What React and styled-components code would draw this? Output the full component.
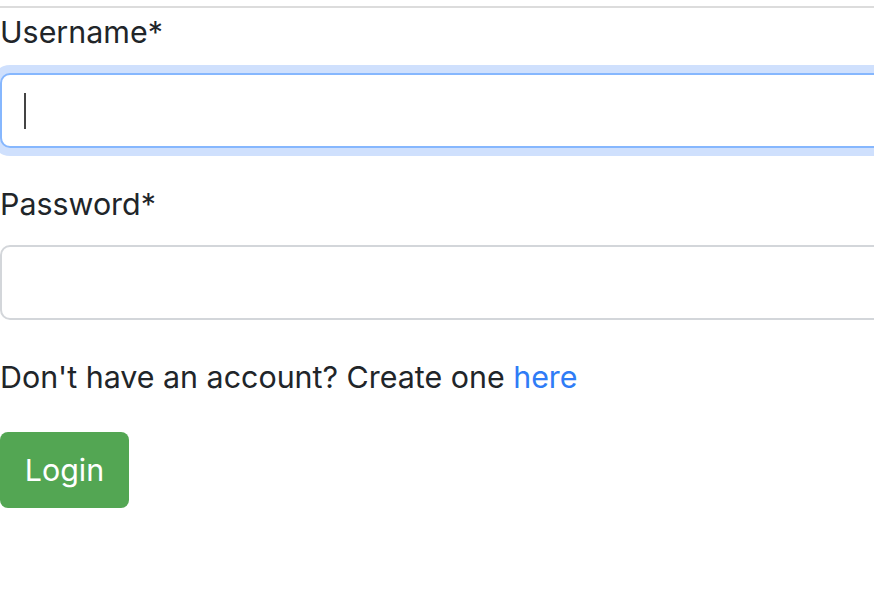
import React from "react";
import styled, { createGlobalStyle } from "styled-components";

const GlobalStyle = createGlobalStyle`
  html, body {
    margin: 0;
    padding: 0;
    background: #fff;
    overflow: hidden;
  }
  body {
    font-family: Inter, "Liberation Sans", Arial, sans-serif;
    color: #212529;
  }
`;

const Page = styled.div`
  width: 1000px;
`;

const Rule = styled.hr`
  margin: 6px 0 0;
  border: 0;
  border-top: 2px solid #dcdcdc;
`;

const Form = styled.form`
  display: flex;
  flex-direction: column;
`;

const Field = styled.div`
  display: flex;
  flex-direction: column;
  margin-top: ${p => p.top}px;
`;

const Label = styled.label`
  font-size: 30.4px;
  line-height: 44px;
  margin-bottom: 19px;
`;

const Input = styled.input`
  box-sizing: border-box;
  height: 75px;
  width: 100%;
  padding: 0 22px;
  font-size: 30.4px;
  font-family: inherit;
  color: #212529;
  background: #fff;
  border: 2px solid ${p => (p.focused ? "#86b7fe" : "#d3d6da")};
  border-radius: 10px;
  outline: none;
  box-shadow: ${p => (p.focused ? "0 0 0 8px #cfe0fd" : "none")};
  caret-color: #333;
`;

const Caret = styled.span`
  position: absolute;
  left: 24px;
  top: 20px;
  width: 2px;
  height: 36px;
  background: #444;
`;

const InputWrap = styled.div`
  position: relative;
`;

const Note = styled.p`
  margin: 35px 0 0;
  font-size: 30.4px;
  line-height: 44px;
`;

const Link = styled.a`
  color: #2f7cf6;
  text-decoration: none;
`;

const Actions = styled.div`
  margin-top: 33px;
`;

const Button = styled.button`
  box-sizing: border-box;
  width: 129px;
  height: 76px;
  border: 0;
  border-radius: 8px;
  background: #53a653;
  color: #fff;
  font-family: inherit;
  font-size: 30.4px;
  padding: 0;
  cursor: pointer;
`;

const App = () => {
  return (
    <Page>
      <GlobalStyle />
      <Rule />
      <Form onSubmit={e => e.preventDefault()}>
        <Field top={2}>
          <Label htmlFor="username">Username*</Label>
          <InputWrap>
            <Input id="username" type="text" focused />
            <Caret />
          </InputWrap>
        </Field>
        <Field top={34}>
          <Label htmlFor="password">Password*</Label>
          <Input id="password" type="password" />
        </Field>
        <Note>
          Don't have an account? Create one <Link href="#">here</Link>
        </Note>
        <Actions>
          <Button type="submit">Login</Button>
        </Actions>
      </Form>
    </Page>
  );
};

export default App;
